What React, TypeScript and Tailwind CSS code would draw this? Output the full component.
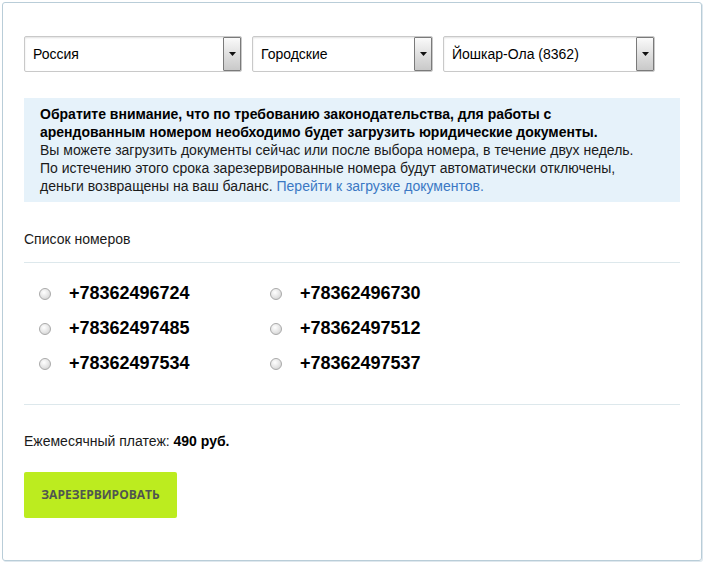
import React from "react";

const FONT = "font-['Liberation_Sans',Arial,sans-serif]";

const Select: React.FC<{ label: string; width: string }> = ({ label, width }) => (
  <div
    className={`${width} h-[36px] flex items-stretch bg-white border border-[#c9c9c9] rounded-[2px] shadow-[inset_0_1px_2px_rgba(0,0,0,0.12)]`}
  >
    <div className="flex-1 flex items-center pl-[8px] text-[14px] text-black">{label}</div>
    <div className="w-[18px] flex items-center justify-center border border-[#7a7a7a] rounded-[1px] bg-[linear-gradient(#fafafa,#dedede_55%,#c9c9c9)]">
      <svg width="7" height="4" viewBox="0 0 7 4">
        <path d="M0 0h7L3.5 4z" fill="#111" />
      </svg>
    </div>
  </div>
);

const Radio: React.FC<{ number: string }> = ({ number }) => (
  <label className="h-[35px] flex items-center">
    <span className="w-[12px] h-[12px] rounded-full border border-[#a9a9a9] bg-[radial-gradient(circle_at_40%_35%,#ffffff,#e4e4e4_55%,#c8c8c8)]" />
    <span className="ml-[18px] text-[18px] font-bold text-black">{number}</span>
  </label>
);

const numbers = [
  "+78362496724",
  "+78362496730",
  "+78362497485",
  "+78362497512",
  "+78362497534",
  "+78362497537",
];

export default function App() {
  return (
    <div className={`w-[704px] h-[563px] bg-white pt-[2px] pl-[2px] ${FONT}`}>
      <div className="w-[700px] h-[559px] border border-[#b9cdd8] rounded-[3px] px-[21px] pt-[33px] shadow-[1px_1px_0_#dfe8ee]">
        <div className="flex gap-[10px]">
          <Select label="Россия" width="w-[218px]" />
          <Select label="Городские" width="w-[181px]" />
          <Select label="Йошкар-Ола (8362)" width="w-[212px]" />
        </div>

        <div className="mt-[26px] w-[656px] bg-[#e6f2fa] px-[16px] py-[7px] text-[14px] leading-[18px] text-[#1a1a1a]">
          <p className="font-bold text-black">
            Обратите внимание, что по требованию законодательства, для работы с
            <br />
            арендованным номером необходимо будет загрузить юридические документы.
          </p>
          <p>
            Вы можете загрузить документы сейчас или после выбора номера, в течение двух недель.
            <br />
            По истечению этого срока зарезервированные номера будут автоматически отключены,
            <br />
            деньги возвращены на ваш баланс.{" "}
            <a className="text-[#3b78c4]">Перейти к загрузке документов.</a>
          </p>
        </div>

        <div className="mt-[28px] text-[14px] leading-[18px] text-[#1a1a1a]">Список номеров</div>
        <div className="mt-[14px] w-[656px] border-t border-[#dde8ec]" />

        <div className="pl-[15px] pt-[13px] pb-[23px] grid grid-cols-[231px_1fr]">
          {numbers.map((n) => (
            <Radio key={n} number={n} />
          ))}
        </div>
        <div className="w-[656px] border-t border-[#dde8ec]" />

        <div className="mt-[27px] text-[14px] leading-[18px] text-[#1a1a1a]">
          Ежемесячный платеж: <span className="font-bold text-black">490 руб.</span>
        </div>

        <button className="mt-[22px] w-[153px] h-[46px] rounded-[2px] bg-[#bcec1f] text-[#4f5550] text-[12px] font-bold font-['Open_Sans',sans-serif] uppercase">
          Зарезервировать
        </button>
      </div>
    </div>
  );
}
